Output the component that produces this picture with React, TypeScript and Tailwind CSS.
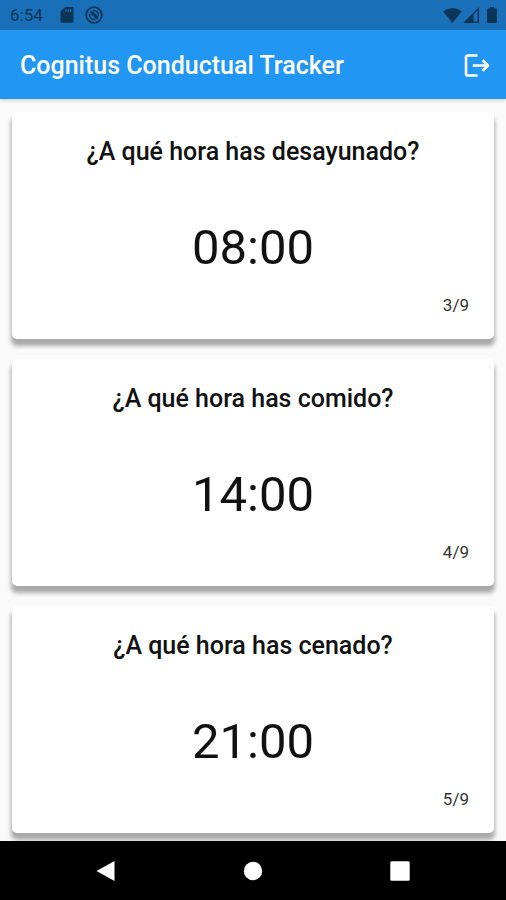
import React from 'react';

const questions = [
  { title: '¿A qué hora has desayunado?', time: '08:00', step: 3 },
  { title: '¿A qué hora has comido?', time: '14:00', step: 4 },
  { title: '¿A qué hora has cenado?', time: '21:00', step: 5 },
];

const TOTAL_STEPS = 9;

const StatusBar = () => (
  <div className="flex h-[30px] shrink-0 items-center bg-[#1a70b8] pl-[10px] pr-[9px] text-[#0b3557]">
    <span className="text-[17px] leading-5">6:54</span>
    {/* SD card */}
    <svg className="ml-[17px] h-4 w-[14px]" viewBox="0 0 14 16" fill="currentColor" aria-hidden="true">
      <path
        fillRule="evenodd"
        d="M5 0h7.200A1.300 1.300 0 0 1 13.500 1.300v13.200a1.300 1.300 0 0 1-1.300 1.300H1.800A1.300 1.300 0 0 1 .500 14.500V4.600zM5.200 2.200v2.600h1.300V2.200zm2.400 0v2.600h1.300V2.200zm2.400 0v2.600h1.300V2.200z"
      />
    </svg>
    {/* Sync disc */}
    <svg className="ml-[11px] h-[18px] w-[18px]" viewBox="0 0 18 18" fill="none" stroke="currentColor" aria-hidden="true">
      <circle cx="9" cy="9" r="7.800" strokeWidth="1.800" />
      <path d="M4.600 8a4.500 4.500 0 0 0 5.400 5.400" strokeWidth="1.400" />
      <path d="M8 4.600a4.500 4.500 0 0 1 5.400 5.400" strokeWidth="1.400" />
      <path d="M5 5.400L7.500 5l5.700 5.700-.4 2.300-2.300.2L9 10.500 6 8.500z" fill="currentColor" stroke="none" />
    </svg>
    <div className="ml-auto flex items-center">
      <svg className="h-[15px] w-[19px]" viewBox="0 0 19 15" fill="currentColor" aria-hidden="true">
        <path d="M9.500 15L.300 3.600C2.900 1.400 6 .300 9.500.300s6.600 1.100 9.200 3.300z" />
      </svg>
      <svg className="ml-[1px] h-4 w-4" viewBox="0 0 16 16" fill="currentColor" aria-hidden="true">
        <path fillRule="evenodd" d="M0 16L16 0v16zM10.500 7.600v7h4V3.600z" />
      </svg>
      <svg className="ml-2 h-4 w-[10px]" viewBox="0 0 10 16" fill="currentColor" aria-hidden="true">
        <path d="M3 0h4v1.600h2a1 1 0 0 1 1 1V15a1 1 0 0 1-1 1H1a1 1 0 0 1-1-1V2.600a1 1 0 0 1 1-1h2z" />
      </svg>
    </div>
  </div>
);

const AppBar = () => (
  <header className="relative z-10 flex h-[69px] shrink-0 items-center justify-between bg-[#2196f3] pl-5 pr-4 pt-0.5 text-white shadow-[0_1px_4px_rgba(0,0,0,0.2)]">
    <h1 className="text-[25px] font-medium leading-8">Cognitus Conductual Tracker</h1>
    <button type="button" aria-label="Cerrar sesión">
      <svg
        className="h-6 w-[26px]"
        viewBox="0 0 26 24"
        fill="none"
        stroke="currentColor"
        strokeWidth="2.600"
        strokeLinejoin="round"
        aria-hidden="true"
      >
        <path d="M13.500 1.500H3.800a1.800 1.800 0 0 0-1.800 1.800v16.400a1.800 1.800 0 0 0 1.800 1.800h9.700" />
        <path d="M8.800 11.500H24M18.600 6.200l5.400 5.300-5.400 5.300" />
      </svg>
    </button>
  </header>
);

const QuestionCard = ({ title, time, step }: { title: string; time: string; step: number }) => (
  <section className="flex flex-col rounded-[5px] bg-white px-[25px] pb-[22px] pt-6 text-center shadow-[0_6px_4px_1px_rgba(0,0,0,0.32)]">
    <h2 className="text-[25px] font-medium leading-8">{title}</h2>
    <button type="button" className="mt-[50px] self-center text-[49px] leading-[60px]">
      {time}
    </button>
    <p className="mt-[15px] text-right text-[17px] leading-6 text-[#333333]">
      {step}/{TOTAL_STEPS}
    </p>
  </section>
);

const NavigationBar = () => (
  <nav className="relative z-10 flex h-[59px] shrink-0 items-center justify-around bg-black px-8 text-white">
    <button type="button" aria-label="Atrás">
      <svg className="h-5 w-5" viewBox="0 0 20 20" fill="currentColor" aria-hidden="true">
        <path d="M18.500 0v20L.500 10z" />
      </svg>
    </button>
    <button type="button" aria-label="Inicio">
      <svg className="h-5 w-5" viewBox="0 0 20 20" fill="currentColor" aria-hidden="true">
        <circle cx="10" cy="10" r="9.200" />
      </svg>
    </button>
    <button type="button" aria-label="Recientes">
      <svg className="h-5 w-5" viewBox="0 0 20 20" fill="currentColor" aria-hidden="true">
        <rect x=".300" y=".300" width="19.400" height="19.400" rx="1.500" />
      </svg>
    </button>
  </nav>
);

const App = () => {
  return (
    <div className="flex h-screen flex-col bg-[#fafafa] font-['Roboto',sans-serif] text-[#111111]">
      <StatusBar />
      <AppBar />
      <main className="flex min-h-0 flex-1 flex-col gap-5 overflow-y-auto px-3 pt-[13px] [scrollbar-width:none]">
        {questions.map((question) => (
          <QuestionCard key={question.step} {...question} />
        ))}
      </main>
      <NavigationBar />
    </div>
  );
};

export default App;
